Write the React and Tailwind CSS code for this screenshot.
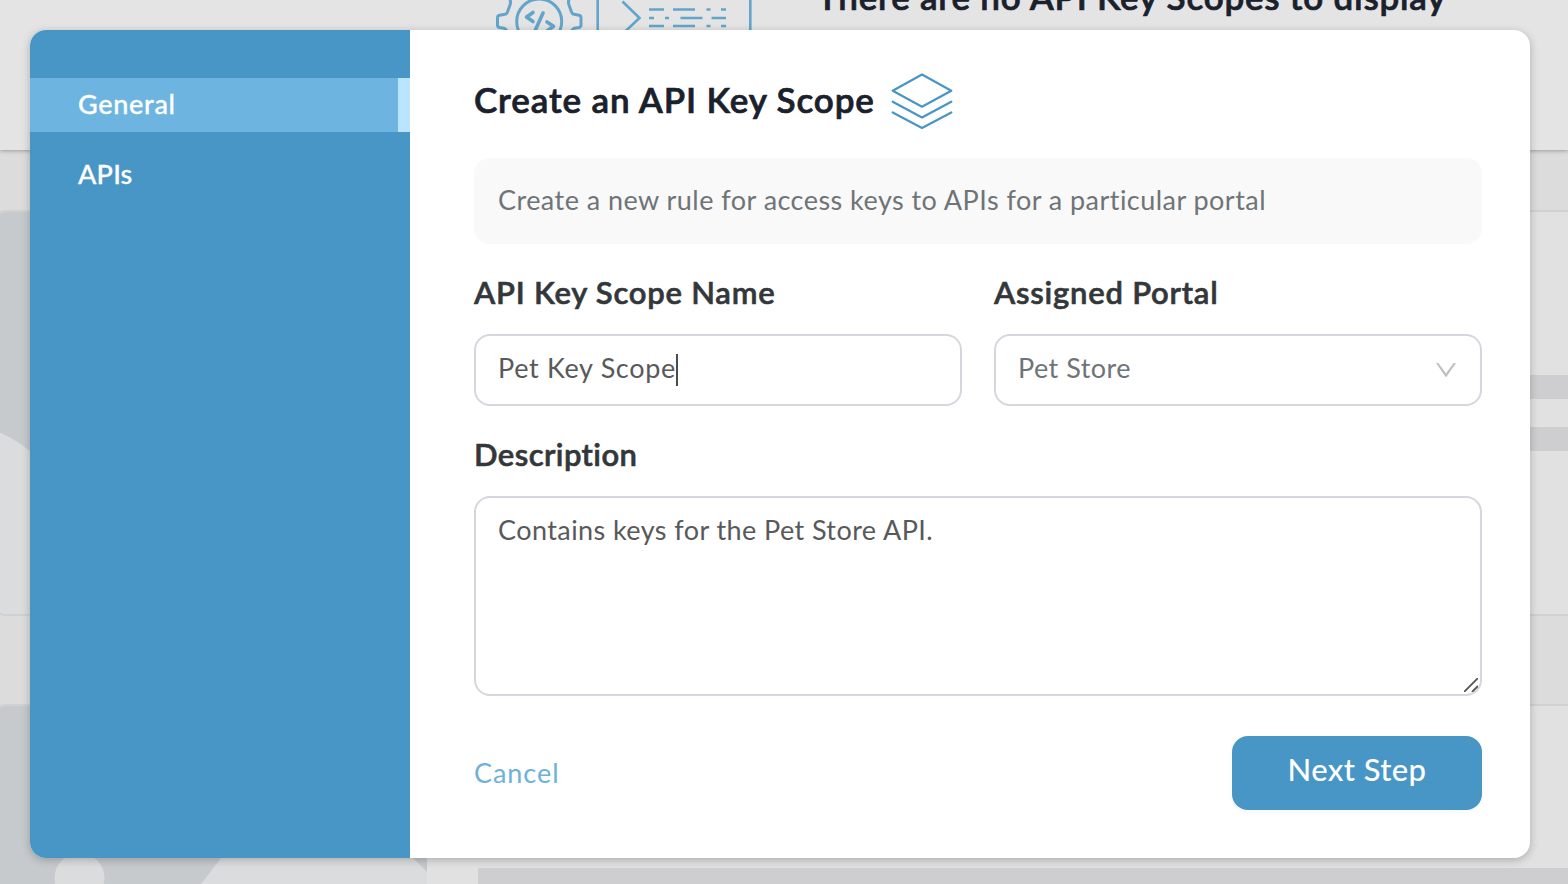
import React from "react";

function GearConsoleIcon() {
  return (
    <svg width="258" height="60" viewBox="0 0 258 60" fill="none" stroke="#62a5cb" strokeWidth="3">
      <g strokeLinejoin="round" strokeLinecap="round">
        <path d="M12.500 -4 Q15.500 1 14 5 L11.500 12 Q11 14 9 14.300 L3.500 15.300 Q1.500 15.700 1.500 18 V25 Q1.500 27 3.500 27.500 L8 28.200 Q10 29 11 31 L14 38" />
        <path d="M74.500 -4 Q71.500 1 73 5 L75.500 12 Q76 14 78 14.300 L83 15.300 Q85 15.700 85 18 V25 Q85 27 83 27.500 L78.500 28.200 Q76.500 29 75.500 31 L72.500 38" />
        <circle cx="43.200" cy="21.500" r="22.500" />
        <path d="M37 12.500 L30.500 17 L37 21.500 M47 13 L38.500 32 M51 22 L57.500 26.300 L51 31" strokeWidth="3.600" />
      </g>
      <path d="M101.700 -2 V60 M254.300 -2 V60" strokeWidth="2.600" />
      <path d="M126.500 1.500 L143.500 18 L126.500 34" strokeWidth="2.600" />
      <g strokeWidth="2.600">
        <path d="M153 9.500 H168 M177 9.500 H199 M210.500 9.500 H214.500 M225 9.500 H230" />
        <path d="M153 18 H158 M169 18 H173 M184.500 18 H206.500 M215.500 18 H230" />
        <path d="M153 26 H168 M177 26 H199 M210.500 26 H214.500 M225 26 H230" />
      </g>
    </svg>
  );
}

function LayersIcon() {
  return (
    <svg width="62" height="56" viewBox="0 0 62 56" fill="none" stroke="#4896c6" strokeWidth="2.200" strokeLinejoin="round" strokeLinecap="round">
      <path d="M31 1.500 L60.300 17.700 L31 33.700 L1.700 17.700 Z" />
      <path d="M1.700 28.700 L31 44.500 L60.300 28.700" />
      <path d="M1.700 39.500 L31 55 L60.300 39.500" />
    </svg>
  );
}

function BackgroundCard({ className, children, bars }) {
  return (
    <div className={`-ml-2 flex w-[1600px] shrink-0 overflow-hidden rounded-[14px] border-2 border-[#d0d1d3] bg-[#e1e1e1] ${className}`}>
      <div className="w-[433px] shrink-0 bg-[#c6cacd]">{children}</div>
      <div className="flex grow flex-col pl-[51px]">{bars}</div>
    </div>
  );
}

function Backdrop() {
  return (
    <div className="flex h-[884px] flex-col">
      <div className="z-10 flex h-[150px] shrink-0 items-start bg-[#e4e4e4] pl-[496px] shadow-[0_1px_4px_rgba(0,0,0,0.3)]">
        <GearConsoleIcon />
        <h1 className="-mt-[25px] ml-[63px] text-[35px] leading-[42px] font-semibold tracking-[0.77px] whitespace-nowrap text-[#1a202c] [-webkit-text-stroke:0.7px_#1a202c]">
          There are no API Key Scopes to display
        </h1>
      </div>
      <BackgroundCard
        className="mt-[60px] h-[406px]"
        bars={
          <>
            <div className="mt-[163px] h-6 bg-[#cecdd0]" />
            <div className="mt-7 h-6 bg-[#cecdd0]" />
          </>
        }
      >
        <svg width="433" height="402" viewBox="0 0 433 402">
          <path d="M0 219 Q14 222 36 239 L120 310 L433 402 H0 Z" fill="#dbdcde" />
        </svg>
      </BackgroundCard>
      <BackgroundCard className="mt-[88px] h-[406px]" bars={<div className="mt-[162px] h-6 bg-[#cecdd0]" />}>
        <svg width="433" height="402" viewBox="0 0 433 402">
          <circle cx="85.500" cy="172" r="25" fill="#dbdcde" />
          <path d="M207 178 L240 135 Q320 60 400 133 L433 166 V402 H207 Z" fill="#dbdcde" />
        </svg>
      </BackgroundCard>
    </div>
  );
}

function Label({ tracking = "tracking-[0.76px]", children }) {
  return (
    <div className={`h-10 text-[31px] leading-10 font-semibold whitespace-nowrap text-[#33373a] [-webkit-text-stroke:0.6px_#33373a] ${tracking}`}>
      {children}
    </div>
  );
}

function Sidebar() {
  return (
    <nav className="flex w-[380px] shrink-0 flex-col gap-4 bg-[#4896c5] pt-12 text-[27px] font-medium text-white [-webkit-text-stroke:0.3px_white]">
      <div className="flex h-[54px] items-center border-r-[12px] border-[#bbe5ff] bg-[#6db5e0] pb-[1px] pl-12 tracking-[0.7px]">General</div>
      <div className="flex h-[54px] items-center pb-[1px] pl-12 tracking-[0.2px]">APIs</div>
    </nav>
  );
}

export default function App() {
  return (
    <div className="relative h-[884px] w-[1568px] overflow-hidden bg-[#dcdcdc] font-['Lato','Open_Sans',sans-serif]">
      <Backdrop />
      <div className="absolute inset-0 z-20 px-[30px] pt-[30px]">
        <div className="flex h-[828px] w-[1500px] overflow-hidden rounded-2xl bg-white shadow-[0_2px_8px_rgba(0,0,0,0.24)]">
          <Sidebar />
          <main className="flex grow flex-col pt-[43px] pr-12 pl-16">
            <div className="flex h-14 items-center gap-4">
              <h2 className="w-[401px] pb-[5px] text-[35px] leading-[42px] font-semibold tracking-[0.87px] whitespace-nowrap text-[#1a202c] [-webkit-text-stroke:0.7px_#1a202c]">
                Create an API Key Scope
              </h2>
              <LayersIcon />
            </div>
            <div className="mt-[29px] flex h-[86px] items-center rounded-2xl bg-[#f9f9f9] pb-[1px] pl-6 text-[27px] tracking-[0.46px] whitespace-nowrap text-[#6e7477]">
              Create a new rule for access keys to APIs for a particular portal
            </div>
            <div className="mt-7 grid grid-cols-2 gap-8">
              <div>
                <Label>API Key Scope Name</Label>
                <div className="mt-[22px] flex h-[72px] items-center rounded-2xl border-2 border-[#d4d7de] pl-[22px] text-[27px] text-[#58595b]">
                  <span className="pb-[3px] tracking-[0.68px]">Pet Key Scope</span>
                  <span className="h-8 w-[2px] bg-[#4a4b4d]" />
                </div>
              </div>
              <div>
                <Label>Assigned Portal</Label>
                <div className="mt-[22px] flex h-[72px] items-center justify-between rounded-2xl border-2 border-[#d4d7de] pr-6 pl-[22px] text-[27px] text-[#6e7477]">
                  <span className="pb-[3px] tracking-[0.48px]">Pet Store</span>
                  <svg width="20" height="14" viewBox="0 0 20 14" fill="#bfbfbf">
                    <path d="M0 0 H2.400 L10 10.500 L17.600 0 H20 L10.700 13.500 Q10 14.300 9.300 13.500 Z" />
                  </svg>
                </div>
              </div>
            </div>
            <div className="mt-7">
              <Label tracking="tracking-[0.42px]">Description</Label>
              <div className="relative mt-[22px] h-[200px] rounded-2xl border-2 border-[#d4d7de] pt-[14px] pl-[22px] text-[27px] leading-9 tracking-[0.42px] text-[#58595b]">
                Contains keys for the Pet Store API.
                <svg className="absolute right-[2px] bottom-[2px]" width="14" height="14" viewBox="0 0 14 14" stroke="#555" strokeWidth="1.800">
                  <path d="M0 14 L14 0 M8 14 L14 8" />
                </svg>
              </div>
            </div>
            <div className="mt-10 flex h-[74px] items-center justify-between">
              <button className="pb-[1px] text-[27px] leading-9 tracking-[0.95px] text-[#6db1dc]">Cancel</button>
              <button className="h-[74px] w-[250px] rounded-2xl bg-[#4896c6] pb-[8px] text-[31px] font-medium tracking-[0.4px] text-white shadow-[0_2px_4px_rgba(0,0,0,0.04)]">Next Step</button>
            </div>
          </main>
        </div>
      </div>
    </div>
  );
}
